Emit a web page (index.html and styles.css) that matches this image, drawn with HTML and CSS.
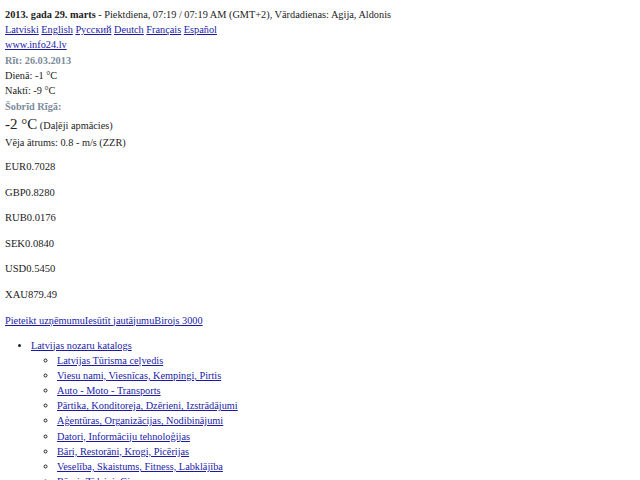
FILE: index.html
```html
<!DOCTYPE html>
<html lang="lv">
<head>
<meta charset="utf-8">
<title>info24.lv</title>
<link rel="stylesheet" href="styles.css">
</head>
<body>
<div class="line"><b>2013. gada 29. marts</b> - Piektdiena, 07:19 / 07:19 AM (GMT+2), Vārdadienas: Agija, Aldonis</div>
<div class="line"><a href="#">Latviski</a> <a href="#">English</a> <a href="#">Русский</a> <a href="#">Deutch</a> <a href="#">Français</a> <a href="#">Español</a></div>
<div class="line"><a href="#">www.info24.lv</a></div>
<div class="line label">Rīt: 26.03.2013</div>
<div class="line">Dienā: -1 °C</div>
<div class="line">Naktī: -9 °C</div>
<div class="line label">Šobrīd Rīgā:</div>
<div class="line now"><span class="big">-2 °C</span> (Daļēji apmācies)</div>
<div class="line">Vēja ātrums: 0.8 - m/s (ZZR)</div>
<div class="rates">
<p class="cur">EUR0.7028</p>
<p class="cur">GBP0.8280</p>
<p class="cur">RUB0.0176</p>
<p class="cur">SEK0.0840</p>
<p class="cur">USD0.5450</p>
<p class="cur">XAU879.49</p>
<p class="cur"><a href="#">Pieteikt uzņēmumuIesūtīt jautājumuBirojs 3000</a></p>
</div>
<ul class="cat">
<li><a href="#">Latvijas nozaru katalogs</a>
<ul>
<li><a href="#">Latvijas Tūrisma ceļvedis</a></li>
<li><a href="#">Viesu nami, Viesnīcas, Kempingi, Pirtis</a></li>
<li><a href="#">Auto - Moto - Transports</a></li>
<li><a href="#">Pārtika, Konditoreja, Dzērieni, Izstrādājumi</a></li>
<li><a href="#">Aģentūras, Organizācijas, Nodibinājumi</a></li>
<li><a href="#">Datori, Informāciju tehnoloģijas</a></li>
<li><a href="#">Bāri, Restorāni, Krogi, Picērijas</a></li>
<li><a href="#">Veselība, Skaistums, Fitness, Labklājība</a></li>
<li><a href="#">Bērni, Zīdaiņi, Ģimene</a></li>
</ul>
</li>
</ul>
</body>
</html>
```
FILE: styles.css
```css
body {
  margin: 7px 5px;
  font-family: "Liberation Serif", "Times New Roman", serif;
  font-size: 10.3px;
  line-height: 15px;
  color: #222;
  background: #fff;
}
a { color: #1a1aa6; }
.line { min-height: 15px; }
.label { color: #7d8c9b; font-weight: bold; margin-top: 1px; }
.now { line-height: 19px; margin-top: 1px; }
.big { font-size: 15px; }
.rates { margin-top: 4px; }
.cur { margin: 0; padding: 5px 0; line-height: 15px; margin-bottom: 0.6px; font-size: 10.6px; }
.cur a { font-size: 10.3px; }
.cat { margin: 5px 0 0; padding-left: 26px; }
.cat li { list-style: disc; line-height: 15.15px; }
.cat ul { padding-left: 26px; margin: 0; }
.cat ul li { list-style: circle; }
```
